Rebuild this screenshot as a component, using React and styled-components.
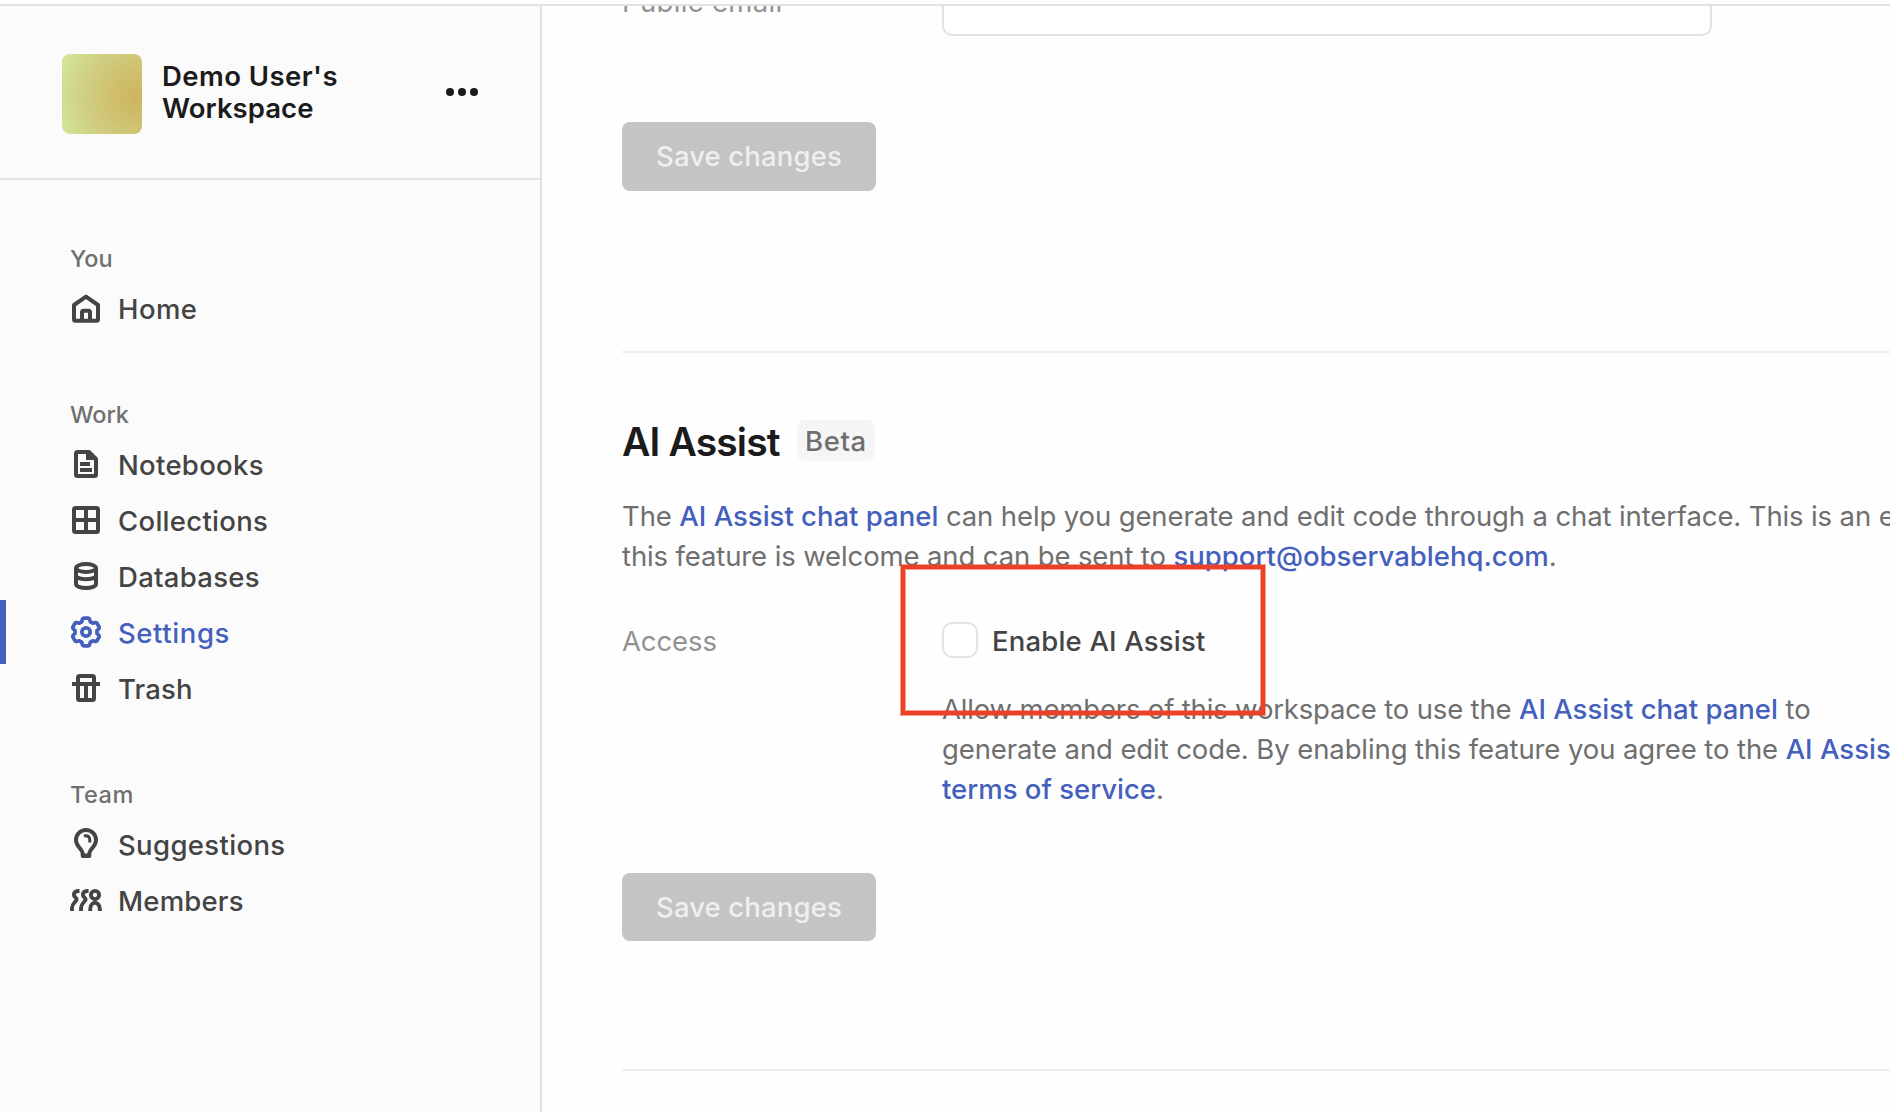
import React from 'react';
import styled, { createGlobalStyle } from 'styled-components';

const GlobalStyle = createGlobalStyle`
  * { box-sizing: border-box; }
  body { margin: 0; background: #fefefe; overflow: hidden; }
`;

const Page = styled.div`
  display: flex;
  flex-direction: column;
  width: 100vw;
  height: 100vh;
  overflow: hidden;
  padding-top: 4px;
  background: #fefefe;
  font-family: Inter, "Liberation Sans", sans-serif;
  font-size: 27.5px;
  line-height: 33px;
  color: #6f6f6f;
`;

const Shell = styled.div`
  display: flex;
  flex: 1;
  min-height: 0;
  border-top: 2px solid #e2e2e2;
`;

const Sidebar = styled.aside`
  flex: 0 0 542px;
  border-right: 2px solid #e2e2e2;
  background: #fbfbfb;
`;

const WorkspaceHeader = styled.header`
  display: flex;
  align-items: flex-start;
  height: 174px;
  padding: 48px 60px 0 62px;
  border-bottom: 2px solid #e2e2e2;
`;

const Avatar = styled.div`
  width: 80px;
  height: 80px;
  border-radius: 8px;
  background: radial-gradient(circle at 95% 54%, #ceb45e 0, #cfbf6d 28%, #d0cf83 62%, #d2e095 88%, #d4e79d 100%);
`;

const WorkspaceName = styled.div`
  flex: 1;
  margin: 6px 0 0 20px;
  font-weight: 640;
  line-height: 32px;
  color: #1b1b1b;
`;

const MoreButton = styled.button`
  display: flex;
  gap: 4px;
  margin-top: 34px;
  padding: 0 2px 0 0;
  border: 0;
  background: none;
`;

const Dot = styled.span`
  width: 8px;
  height: 8px;
  border-radius: 50%;
  background: #1b1b1b;
`;

const Nav = styled.nav`
  display: flex;
  flex-direction: column;
  gap: 56px;
  padding-top: 56px;
`;

const NavHeading = styled.div`
  height: 44px;
  padding: 9px 0 0 70px;
  font-size: 23.5px;
  font-weight: 520;
  line-height: 28px;
  color: #707070;
`;

const NavItem = styled.a`
  position: relative;
  display: flex;
  gap: 16px;
  height: 56px;
  padding: 12px 0 0 70px;
  font-weight: 550;
  color: ${(p) => (p.$active ? '#4460bd' : '#444444')};

  &::before {
    content: "";
    display: ${(p) => (p.$active ? 'block' : 'none')};
    position: absolute;
    left: 0;
    top: -4px;
    width: 6px;
    height: 64px;
    background: #4460bd;
  }
`;

const NavLabel = styled.span`
  padding-top: 1px;
`;

const Tracked = styled.span`
  letter-spacing: ${(p) => p.$by}px;
`;

const Icon = styled.svg.attrs({ viewBox: '0 0 32 32', width: 32, height: 32 })`
  flex: none;
  fill: none;
  stroke: currentColor;
  stroke-width: ${(p) => p.$weight || 4};
  stroke-linejoin: round;
`;

const Main = styled.main`
  flex: 1;
  min-width: 0;
  overflow: hidden;
`;

const Settings = styled.div`
  margin-top: -42px;
  padding-left: 80px;
  white-space: nowrap;
`;

const Field = styled.div`
  display: grid;
  grid-template-columns: 320px 1fr;
  align-items: start;
`;

const FieldLabel = styled.div`
  padding-top: ${(p) => p.$top}px;
  color: #929292;
`;

const TextInput = styled.input`
  width: 770px;
  height: 72px;
  border: 2px solid #e2e2e2;
  border-radius: 10px;
  background: #fff;
`;

const SaveButton = styled.button`
  display: flex;
  align-items: flex-start;
  width: 254px;
  height: ${(p) => p.$height}px;
  margin-top: ${(p) => p.$top}px;
  padding: 18px 0 0 34px;
  border: 0;
  border-radius: 8px;
  background: #c4c4c4;
  color: #efefef;
  font: 540 27.5px/33px Inter, "Liberation Sans", sans-serif;
`;

const Divider = styled.hr`
  height: 2px;
  margin: ${(p) => p.$top}px 0 0;
  border: 0;
  background: #efefef;
`;

const TitleRow = styled.div`
  display: flex;
  align-items: flex-start;
  margin-top: 65px;
`;

const Title = styled.h2`
  width: 175px;
  margin: 0;
  font-size: 39px;
  font-weight: 600;
  line-height: 47px;
  color: #1b1b1b;
`;

const Badge = styled.span`
  width: 78px;
  height: 41px;
  margin-top: 2px;
  padding: 5px 0 0 8px;
  border-radius: 8px;
  background: #f5f5f5;
  font-weight: 540;
`;

const Paragraph = styled.p`
  margin: 31px 0 0;
  line-height: 40px;
  letter-spacing: -0.12px;
`;

const Link = styled.a`
  font-weight: 530;
  letter-spacing: 0;
  color: #4460bd;
`;

const AccessField = styled(Field)`
  margin-top: 46px;
`;

const Control = styled.div`
  position: relative;
`;

const CheckRow = styled.label`
  display: flex;
  gap: 14px;
`;

const Checkbox = styled.span`
  width: 36px;
  height: 36px;
  border: 2px solid #e4e4e4;
  border-radius: 10px;
  background: #fff;
`;

const CheckLabel = styled.span`
  padding-top: 3px;
  font-weight: 550;
  color: #444444;
`;

const Highlight = styled.div`
  position: absolute;
  left: -41px;
  top: -57px;
  width: 364px;
  height: 150px;
  border: 4px solid #ec4126;
  box-shadow: 0 0 0 1px rgba(236, 65, 38, 0.5), inset 0 0 0 1px rgba(236, 65, 38, 0.5);
`;

const HomeIcon = () => (
  <Icon>
    <path d="M4 13 16 4.6 28 13v14.2q0 1.5-1.5 1.5h-21q-1.5 0-1.5-1.5z" />
    <path d="M12 28v-7.8q0-1.5 1.5-1.5h5q1.5 0 1.5 1.5V28" />
  </Icon>
);

const NotebookIcon = () => (
  <Icon>
    <path d="M6 5.5Q6 4 7.5 4H19l7 7v15.500q0 1.500-1.500 1.500h-17Q6 28 6 26.500z" />
    <path d="M18 4v6h8M10 16h10M10 22h12" strokeLinejoin="miter" />
  </Icon>
);

const CollectionIcon = () => (
  <Icon>
    <rect x="4" y="4" width="24" height="24" rx="1.5" />
    <path d="M16 4v24M4 16h24" />
  </Icon>
);

const DatabaseIcon = () => (
  <Icon>
    <ellipse cx="16" cy="8" rx="10" ry="3.9" />
    <path d="M6 8v16c0 2.300 4.500 4 10 4s10-1.700 10-4V8" />
    <path d="M6 15.500c0 2.300 4.500 3.700 10 3.700s10-1.400 10-3.700" />
  </Icon>
);

// One tooth of the gear, repeated every 60 degrees.
const tooth = [
  [-4.3, -10.2],
  [-3.5, -13],
  [-2.4, -13.9],
  [2.4, -13.9],
  [3.5, -13],
  [4.3, -10.2],
];
const gearPoints = [0, 60, 120, 180, 240, 300]
  .flatMap((deg) => {
    const a = (deg * Math.PI) / 180;
    return tooth.map(([x, y]) => [
      (16 + x * Math.cos(a) - y * Math.sin(a)).toFixed(2),
      (16 + x * Math.sin(a) + y * Math.cos(a)).toFixed(2),
    ]);
  })
  .join(' ');

const SettingsIcon = () => (
  <Icon $weight={3.7}>
    <polygon points={gearPoints} />
    <circle cx="16" cy="16" r="4.2" />
  </Icon>
);

const TrashIcon = () => (
  <Icon>
    <rect x="8" y="4" width="16" height="24" rx="1.500" />
    <path d="M2 12h28M16 12v16" />
  </Icon>
);

const BulbIcon = () => (
  <Icon>
    <path d="M12.700 28v-2.700C12.200 21 6 18.500 6 12a10 10 0 0 1 20 0c0 6.500-6.200 9-6.700 13.300V28z" />
    <path d="M14 27.500h4" />
    <path d="M13.800 7.700h1.700c2.600 0 4.300 1.700 4.300 4.300v2.500" strokeWidth="3" />
  </Icon>
);

const MembersIcon = () => (
  <Icon $weight={3.9}>
    <circle cx="25" cy="11" r="4.100" />
    <path d="M20.200 27v-1.500c0-3.400 1.800-6.800 4.800-6.800s4.900 3.400 4.900 6.800V27" />
    <path d="M18.500 7H17c-2.500 0-4.100 1.500-4.100 3.700 0 2.900 3.100 2.700 2.700 4.900-.4 2.200-4.600 3.600-4.600 8.400v3" />
    <path d="M9.500 7H8c-2.500 0-4.100 1.500-4.100 3.700 0 2.900 3.100 2.700 2.700 4.900C6.200 17.800 2 19.200 2 24v3" />
  </Icon>
);

const sections = [
  { title: 'You', by: 0, items: [{ label: 'Home', by: 0.45, icon: HomeIcon }] },
  {
    title: 'Work',
    by: -0.1,
    items: [
      { label: 'Notebooks', by: 0.3, icon: NotebookIcon },
      { label: 'Collections', by: 0.3, icon: CollectionIcon },
      { label: 'Databases', by: 0.3, icon: DatabaseIcon },
      { label: 'Settings', by: 0.6, icon: SettingsIcon, active: true },
      { label: 'Trash', by: 0.15, icon: TrashIcon },
    ],
  },
  {
    title: 'Team',
    by: 0.5,
    items: [
      { label: 'Suggestions', by: 0.35, icon: BulbIcon },
      { label: 'Members', by: 0.2, icon: MembersIcon },
    ],
  },
];

export default function App() {
  return (
    <Page>
      <GlobalStyle />
      <Shell>
        <Sidebar>
          <WorkspaceHeader>
            <Avatar />
            <WorkspaceName>
              <Tracked $by={0.45}>Demo User's</Tracked>
              <br />
              <Tracked $by={0.05}>Workspace</Tracked>
            </WorkspaceName>
            <MoreButton aria-label="More">
              <Dot />
              <Dot />
              <Dot />
            </MoreButton>
          </WorkspaceHeader>
          <Nav>
            {sections.map((section) => (
              <section key={section.title}>
                <NavHeading>
                  <Tracked $by={section.by}>{section.title}</Tracked>
                </NavHeading>
                {section.items.map(({ label, by, icon: Glyph, active }) => (
                  <NavItem key={label} $active={active}>
                    <Glyph />
                    <NavLabel>
                      <Tracked $by={by}>{label}</Tracked>
                    </NavLabel>
                  </NavItem>
                ))}
              </section>
            ))}
          </Nav>
        </Sidebar>
        <Main>
          <Settings>
            <Field>
              <FieldLabel $top={22}>
                <Tracked $by={0.35}>Public email</Tracked>
              </FieldLabel>
              <TextInput />
            </Field>
            <SaveButton $top={86} $height={69}>
              <Tracked $by={0.13}>Save changes</Tracked>
            </SaveButton>
            <Divider $top={160} />

            <TitleRow>
              <Title>
                <Tracked $by={-0.85}>AI Assist</Tracked>
              </Title>
              <Badge>
                <Tracked $by={0.6}>Beta</Tracked>
              </Badge>
            </TitleRow>
            <Paragraph>
              The <Link>AI Assist chat panel</Link> can help you generate and edit code through a chat interface. This is an experimental feature
              <br />
              this feature is welcome and can be sent to <Link>support@observablehq.com</Link>.
            </Paragraph>

            <AccessField>
              <FieldLabel $top={3}>
                <Tracked $by={-0.1}>Access</Tracked>
              </FieldLabel>
              <Control>
                <CheckRow>
                  <Checkbox />
                  <CheckLabel>
                    <Tracked $by={0.18}>Enable AI Assist</Tracked>
                  </CheckLabel>
                </CheckRow>
                <Paragraph>
                  <Tracked $by={-0.17}>Allow members of this workspace to use the </Tracked>
                  <Link>AI Assist chat panel</Link> to
                  <br />
                  <Tracked $by={-0.1}>generate and edit code. By enabling this feature you agree to the </Tracked>
                  <Link>AI Assist</Link>
                  <br />
                  <Link>terms of service</Link>.
                </Paragraph>
                <Highlight />
              </Control>
            </AccessField>
            <SaveButton $top={64} $height={68}>
              <Tracked $by={0.13}>Save changes</Tracked>
            </SaveButton>
            <Divider $top={128} />
          </Settings>
        </Main>
      </Shell>
    </Page>
  );
}
